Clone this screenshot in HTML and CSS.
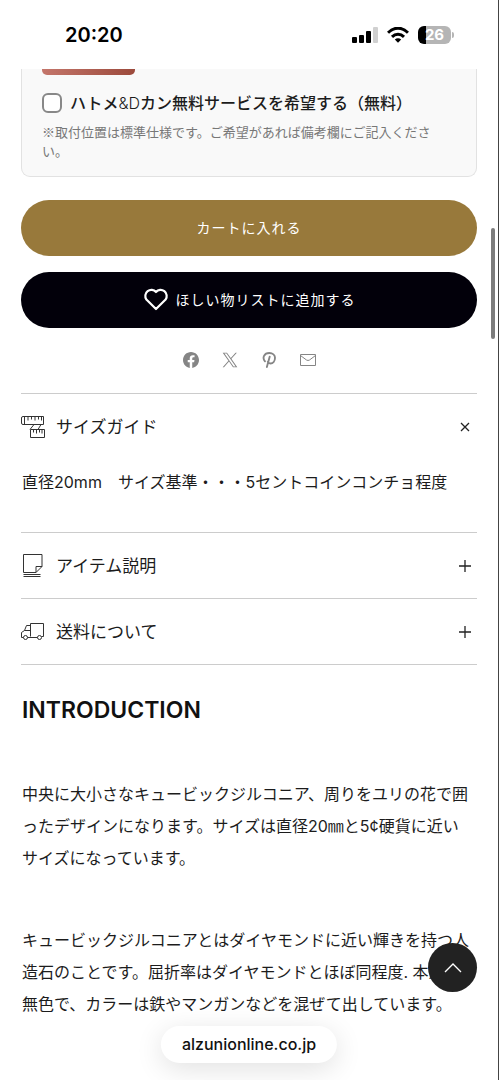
FILE: index.html
```html
<!DOCTYPE html>
<html lang="ja">
<head>
<meta charset="utf-8">
<meta name="viewport" content="width=device-width, initial-scale=1">
<title>alzunionline.co.jp</title>
<link rel="stylesheet" href="styles.css">
</head>
<body>
<div class="screen">
  <header class="status">
    <span class="clock">20:20</span>
    <div class="status-icons">
      <svg width="26" height="16" viewBox="0 0 26 16" aria-hidden="true">
        <rect x="0" y="10" width="5" height="6" rx="1"/><rect x="7" y="8" width="5" height="8" rx="1"/><rect x="14" y="4" width="5" height="12" rx="1"/><rect x="21" y="0" width="5" height="16" rx="1" fill="#d0d0d0"/>
      </svg>
      <svg width="22" height="16" viewBox="0 0 22 16" fill="none" stroke="#000" stroke-width="3" aria-hidden="true">
        <path d="M1 5.8C7-.4 15-.4 21 5.8"/><path d="M5 9.8c3.500-3.400 8.500-3.400 12 0"/><path d="M7.800 12.400c1.900-1.700 4.500-1.700 6.400 0L11 15.800z" fill="#000" stroke="none"/>
      </svg>
      <span class="battery">26</span>
    </div>
  </header>

  <main class="page">
    <section class="option-card">
      <div class="swatch"></div>
      <div class="option">
        <input type="checkbox" id="ring-service" class="check">
        <label for="ring-service" class="option-label">ハトメ<span class="thin">&amp;D</span>カン無料サービスを希望する（無料）</label>
      </div>
      <p class="note">※取付位置は標準仕様です。ご希望があれば備考欄にご記入ください。</p>
    </section>

    <div class="actions">
      <button type="button" class="btn btn-cart">カートに入れる</button>
      <button type="button" class="btn btn-wish">
        <svg width="26" height="24" viewBox="0 0 26 24" fill="none" stroke="#fff" stroke-width="2.200" stroke-linejoin="round" aria-hidden="true"><path d="M13 22 3.400 12.500A6.100 6.100 0 0 1 13 5 6.100 6.100 0 0 1 22.600 12.500z"/></svg>
        ほしい物リストに追加する
      </button>
    </div>

    <nav class="share">
      <a href="#facebook" aria-label="Facebook"><svg width="16" height="16" viewBox="0 0 24 24" fill="#858585"><path d="M24 12.070C24 5.400 18.630 0 12 0S0 5.400 0 12.070C0 18.100 4.390 23.100 10.130 24v-8.440H7.080v-3.490h3.050V9.410c0-3.020 1.790-4.690 4.530-4.690 1.310 0 2.680.24 2.680.24v2.970h-1.510c-1.490 0-1.960.93-1.960 1.890v2.250h3.330l-.53 3.490h-2.800V24C19.610 23.100 24 18.100 24 12.070z"/></svg></a>
      <a href="#x" aria-label="X"><svg width="16" height="16" viewBox="0 0 24 24" fill="#858585"><path d="M14.100 10.300 22.300 1h-2l-7.100 8.100L7.500 1H1l8.600 12.200L1 23h2l7.500-8.600L16.500 23H23zM3.700 2.400h3l13.700 19.200h-3z"/></svg></a>
      <a href="#pinterest" aria-label="Pinterest"><svg width="16" height="16" viewBox="0 0 24 24" fill="none" stroke="#858585" stroke-width="2.800" stroke-linecap="round"><path d="M6 14C1.500 9 4.500 1.500 12.500 1.500c5 0 8.500 3 8.500 7.200 0 5-3 8.600-6.800 8.600-2 0-3.500-1-4-2.600M13 7 8.800 22.500"/></svg></a>
      <a href="#mail" aria-label="メール"><svg width="16" height="16" viewBox="0 0 16 16" fill="none" stroke="#858585"><path d="M.5 2.500h15v11H.5zM.5 3.500 6.500 8q1.500 1 3 0l6-4.500"/></svg></a>
    </nav>

    <div class="accordion">
      <section class="item">
        <button type="button" class="item-head" aria-expanded="true">
          <svg class="item-icon" viewBox="0 0 24 24" aria-hidden="true"><path d="M2 1.500h20.500v8H2q-1.500 0-1.500-1.500V3Q.5 1.500 2 1.500zM3.500 1.500v8M7 1.500v4M10.500 1.500v3M14 1.500v4M17.500 1.500v3M20.500 1.500v4M13 9.500l-4 5M20 9.500l-3 5M9.500 14.500h14v8h-14zM12.500 14.500v3M15.500 14.500v4M18.500 14.500v3M21 14.500v4"/></svg>
          <span>サイズガイド</span>
          <svg class="sign" viewBox="0 0 12 12" aria-hidden="true"><path d="M2 2l8 8M10 2l-8 8"/></svg>
        </button>
        <p class="item-body">直径<span class="wide">20mm</span>　サイズ基準・・・<span class="wide">5</span>セントコインコンチョ程度</p>
      </section>
      <section class="item">
        <button type="button" class="item-head" aria-expanded="false">
          <svg class="item-icon" viewBox="0 0 24 24" aria-hidden="true"><path d="M2.500.5h18.500v12l-6 6H2.500zM21 12.500h-6v6M2.500 20.500h17M2.500 22.500h17"/></svg>
          <span>アイテム説明</span>
          <svg class="sign" viewBox="0 0 12 12" aria-hidden="true"><path d="M0 6h12M6 0v12"/></svg>
        </button>
      </section>
      <section class="item">
        <button type="button" class="item-head" aria-expanded="false">
          <svg class="item-icon" viewBox="0 0 24 24" aria-hidden="true"><path d="M9.500 16.500V3.500h13v13h-2M16.500 17.500h-10M9.500 5.500h-4l-2 5-3 2v5h2M3.500 10.500h6"/><circle cx="4.500" cy="17.500" r="2"/><circle cx="18.500" cy="17.500" r="2"/></svg>
          <span>送料について</span>
          <svg class="sign" viewBox="0 0 12 12" aria-hidden="true"><path d="M0 6h12M6 0v12"/></svg>
        </button>
      </section>
    </div>

    <article class="intro">
      <h2>INTRODUCTION</h2>
      <p>中央に大小さなキュービックジルコニア、周りをユリの花で囲ったデザインになります。サイズは直径20㎜と5¢硬貨に近いサイズになっています。</p>
      <p>キュービックジルコニアとはダイヤモンドに近い輝きを持つ人造石のことです。屈折率はダイヤモンドとほぼ同程度. 本来は無色で、カラーは鉄やマンガンなどを混ぜて出しています。</p>
    </article>
  </main>

  <button type="button" class="to-top" aria-label="トップへ戻る"><svg width="18" height="10" viewBox="0 0 18 10" fill="none" stroke="#fff" stroke-width="1.300"><path d="M1 9l8-8 8 8"/></svg></button>
  <div class="address">alzunionline.co.jp</div>
  <div class="scrollbar"></div>
</div>
</body>
</html>
```

FILE: styles.css
```css
* { box-sizing: border-box; }
body {
  margin: 0;
  background: #fff;
  color: #1c1c1c;
  font-family: "Noto Sans CJK JP", sans-serif;
}
button { font: inherit; color: inherit; border: 0; background: none; padding: 0; cursor: pointer; }
p, h2 { margin: 0; }
svg { display: block; flex: none; }

.screen {
  position: relative;
  height: 100vh;
  overflow: hidden;
  border-right: 1px solid #444;
}

.status {
  display: flex;
  align-items: center;
  justify-content: space-between;
  height: 69px;
  padding: 0 44px 0 65px;
}
.clock { font: 600 20px/24px Inter, sans-serif; color: #000; }
.status-icons { display: flex; align-items: center; gap: 9px; }
.battery {
  position: relative;
  width: 33px;
  margin-right: 3px;
  border-radius: 6px;
  background: linear-gradient(90deg, #000 8px, #b5b5b5 8px);
  color: #fff;
  font: 700 15px/18px Inter, sans-serif;
  text-align: center;
}
.battery::after {
  content: "";
  position: absolute;
  right: -3px;
  top: 6px;
  width: 2px;
  height: 6px;
  border-radius: 0 2px 2px 0;
  background: #b5b5b5;
}

.page { padding: 0 21px; }

.option-card {
  padding: 0 20px 16px;
  border: 1px solid #e2e2e2;
  border-top: 0;
  border-radius: 0 0 9px 9px;
  background: #f9f9f9;
}
.swatch {
  width: 93px;
  height: 6px;
  border-radius: 0 0 5px 5px;
  background: linear-gradient(90deg, #c4766b, #9c4a3c);
}
.option { display: flex; align-items: center; gap: 8px; margin-top: 16px; }
.check {
  appearance: none;
  width: 20px;
  height: 20px;
  margin: 0;
  border: 2px solid #888;
  border-radius: 6px;
  background: #fff;
}
.option-label { font-size: 16px; line-height: 23px; font-weight: 500; }
.thin { font-family: Inter, sans-serif; font-weight: 300; }
.note { margin-top: 7px; font-size: 13px; line-height: 19px; color: #777; }

.actions { display: grid; gap: 16px; margin-top: 23px; }
.btn {
  display: flex;
  align-items: center;
  justify-content: center;
  gap: 7px;
  height: 56px;
  padding-bottom: 2px;
  border-radius: 28px;
  color: #fff;
  font-size: 14px;
  letter-spacing: 1px;
}
.btn-cart { background: #98793b; }
.btn-wish { background: #02000a; }

.share { display: flex; justify-content: center; gap: 23px; padding: 24px 0 25px; }

.accordion { border-top: 1px solid #ccc; }
.item { border-bottom: 1px solid #ccc; }
.item-head {
  display: flex;
  align-items: center;
  gap: 11px;
  width: 100%;
  height: 65px;
  padding-right: 6px;
  font-size: 17px;
  text-align: left;
}
.item-head span { flex: 1; padding-bottom: 3px; }
.item-icon { width: 24px; height: 24px; fill: none; stroke: #333; }
.sign { width: 12px; height: 12px; fill: none; stroke: #222; stroke-width: 1.3; }
.item-body { padding: 10px 0 38px 1px; font-size: 16px; line-height: 24px; }
.wide { font-family: Inter, sans-serif; }

.intro { padding: 27px 6px 0 1px; font: 16px/32px Inter, "Noto Sans CJK JP", sans-serif; }
.intro h2 { font-size: 23px; line-height: 36px; font-weight: 600; color: #111; }
.intro p { margin-top: 50px; }

.to-top {
  position: absolute;
  right: 21px;
  bottom: 88px;
  display: grid;
  place-items: center;
  width: 49px;
  height: 49px;
  border-radius: 50%;
  background: #222;
}
.address {
  position: absolute;
  left: 50%;
  bottom: 17px;
  transform: translateX(-50%);
  padding: 0 21px;
  border-radius: 19px;
  background: #fff;
  box-shadow: 0 6px 28px rgba(0, 0, 0, .12);
  color: #111;
  font: 500 16px/37px Inter, sans-serif;
}
.scrollbar {
  position: absolute;
  right: 3px;
  top: 228px;
  width: 4px;
  height: 111px;
  border-radius: 2px;
  background: #7c7c7c;
}
```
